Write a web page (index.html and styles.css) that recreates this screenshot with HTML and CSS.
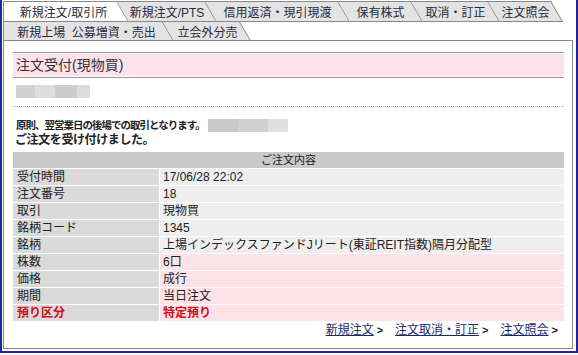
FILE: index.html
```html
<!DOCTYPE html>
<html lang="ja">
<head>
    <meta charset="UTF-8">
    <meta name="viewport" content="width=device-width, initial-scale=1.0">
    <title>注文受付(現物買)</title>
    <link rel="stylesheet" href="styles.css">
</head>
<body>
    <div class="frame">
        <div class="tabs tabs-top">
            <a class="tab first active t-order" href="#">新規注文/取引所</a>
            <a class="tab t-pts" href="#">新規注文/PTS</a>
            <a class="tab t-margin" href="#">信用返済・現引現渡</a>
            <a class="tab t-hold" href="#">保有株式</a>
            <a class="tab t-cancel" href="#">取消・訂正</a>
            <a class="tab t-list" href="#">注文照会</a>
        </div>
        <div class="tabs tabs-sub">
            <a class="tab first t-ipo" href="#">新規上場&nbsp;&nbsp;公募増資・売出</a>
            <a class="tab t-bunbai" href="#">立会外分売</a>
        </div>

        <div class="panel">
            <div class="title">
                <h1>注文受付(現物買)</h1>
            </div>

            <div class="masked masked-name"></div>
            <div class="rule"></div>

            <p class="notice">原則、翌営業日の後場での取引となります。<span class="masked masked-note"></span></p>
            <p class="done">ご注文を受け付けました。</p>

            <div class="order">
                <div class="head">ご注文内容</div>

                <div class="lbl">受付時間</div>
                <div class="val">17/06/28 22:02</div>
                <div class="lbl">注文番号</div>
                <div class="val">18</div>
                <div class="lbl">取引</div>
                <div class="val">現物買</div>
                <div class="lbl">銘柄コード</div>
                <div class="val">1345</div>
                <div class="lbl">銘柄</div>
                <div class="val">上場インデックスファンドJリート(東証REIT指数)隔月分配型</div>

                <div class="lbl">株数</div>
                <div class="val pink">6口</div>
                <div class="lbl">価格</div>
                <div class="val pink">成行</div>
                <div class="lbl">期間</div>
                <div class="val pink">当日注文</div>
                <div class="lbl alert">預り区分</div>
                <div class="val pink alert">特定預り</div>
            </div>

            <div class="links">
                <span><a href="#">新規注文</a><b>&gt;</b></span>
                <span><a href="#">注文取消・訂正</a><b>&gt;</b></span>
                <span><a href="#">注文照会</a><b>&gt;</b></span>
            </div>
        </div>
    </div>
</body>
</html>
```

FILE: styles.css
```css
body {
    margin: 0;
    background: #fff;
    font-family: "Liberation Sans", "Noto Sans CJK JP", sans-serif;
    font-size: 12px;
    color: #222;
}

p {
    margin: 0;
}

.frame {
    height: 353px;
    box-sizing: border-box;
    border: 2px solid #23239c;
    border-top: 0;
    padding: 0 3px 2px 1px;
    display: flex;
    flex-direction: column;
}

/* タブ */
.tabs {
    display: flex;
    border-left: 1px solid #888;
    overflow: hidden;
}

.tabs-top {
    margin-top: 1px;
}

.tab {
    position: relative;
    z-index: 0;
    flex-shrink: 0;
    display: flex;
    align-items: center;
    justify-content: center;
    box-sizing: border-box;
    padding-left: 12px;
    color: #2a2a3a;
    text-decoration: none;
    white-space: pre;
}

.tab::before {
    content: '';
    position: absolute;
    z-index: -1;
    top: 0;
    left: 0;
    right: 0;
    bottom: 0;
    background: #e3e3e3;
    border-right: 1px solid #888;
    transform: skewX(30deg);
    transform-origin: top left;
}

.tabs-top .tab {
    height: 21px;
}

.tabs-top .tab::before {
    border-top: 1px solid #888;
    border-bottom: 1px solid #888;
}

.tabs-sub .tab {
    height: 18px;
}

.tab.first {
    padding-left: 6px;
}

.tab.first::before {
    left: -20px;
}

.tab.active::before {
    background: #fff;
}

.t-order  { width: 113px; }
.t-pts    { width: 88px; }
.t-margin { width: 133px; }
.t-hold   { width: 73px; }
.t-cancel { width: 77px; }
.t-list   { width: 63px; }
.t-ipo    { width: 159px; }
.t-bunbai { width: 77px; }

/* 本体 */
.panel {
    flex: 1;
    border: 1px solid #888;
    padding: 11px 8px 0 9px;
}

.title {
    border-top: 1px solid #999;
    border-bottom: 1px solid #999;
    padding: 1px 0;
}

.title h1 {
    margin: 0;
    height: 22px;
    line-height: 22px;
    padding-left: 3px;
    background: #fde3e9;
    font-size: 14px;
    font-weight: normal;
    color: #3a3035;
}

.masked {
    display: block;
    height: 13px;
}

.masked-name {
    width: 74px;
    margin: 7px 0 0 3px;
    background: linear-gradient(90deg, #d2d2d2 0 19px, #dddddd 19px 39px, #cdcdcd 39px 61px, #dcdcdc 61px);
}

.masked-note {
    width: 80px;
    margin-left: 3px;
    background: linear-gradient(90deg, #c9c9c9 0 30px, #d1d1d1 30px 60px, #e0e0e0 60px);
}

.rule {
    margin-top: 8px;
    border-top: 1px dotted #aaa;
}

.notice {
    display: flex;
    align-items: center;
    margin-top: 12px;
    padding-left: 3px;
    font-size: 10.5px;
    font-weight: bold;
    letter-spacing: -1px;
    line-height: 13px;
}

.done {
    padding-left: 2px;
    font-size: 12px;
    font-weight: bold;
    letter-spacing: -0.4px;
    line-height: 16px;
}

/* ご注文内容 */
.order {
    display: grid;
    grid-template-columns: 146px 1fr;
    grid-auto-rows: 16px;
    gap: 1px;
    margin-top: 4px;
    line-height: 16px;
}

.head {
    grid-column: 1 / -1;
    background: #c9c9c9;
    text-align: center;
    font-size: 11px;
}

.lbl {
    background: #dadada;
    padding-left: 4px;
}

.val {
    background: #eeeeee;
    padding-left: 3px;
    white-space: nowrap;
}

.val.pink {
    background: #fde3e8;
}

.alert {
    color: #d0101a;
    font-weight: bold;
}

/* リンク */
.links {
    display: flex;
    justify-content: flex-end;
    gap: 12px;
    margin-top: 1px;
    padding-right: 6px;
    line-height: 17px;
}

.links a {
    color: #1b2a6c;
    text-decoration: underline;
}

.links b {
    margin-left: 3px;
    font-size: 11px;
    color: #1b2030;
}
```
